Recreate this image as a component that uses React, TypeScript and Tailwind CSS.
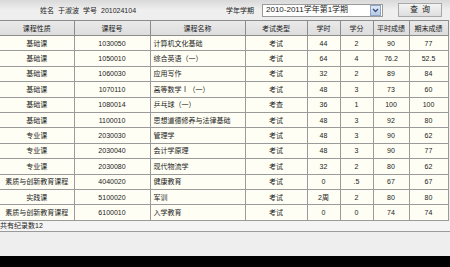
import React from "react";

const rows = [
  ["基础课", "1030050", "计算机文化基础", "考试", "44", "2", "90", "77"],
  ["基础课", "1050010", "综合英语（一）", "考试", "64", "4", "76.2", "52.5"],
  ["基础课", "1060030", "应用写作", "考试", "32", "2", "89", "84"],
  ["基础课", "1070110", "高等数学Ⅰ（一）", "考试", "48", "3", "73", "60"],
  ["基础课", "1080014", "乒乓球（一）", "考查", "36", "1", "100", "100"],
  ["基础课", "1100010", "思想道德修养与法律基础", "考试", "48", "3", "92", "80"],
  ["专业课", "2030030", "管理学", "考试", "48", "3", "90", "62"],
  ["专业课", "2030040", "会计学原理", "考试", "48", "3", "90", "77"],
  ["专业课", "2030080", "现代物流学", "考试", "32", "2", "80", "62"],
  ["素质与创新教育课程", "4040020", "健康教育", "考试", "0", ".5", "67", "67"],
  ["实践课", "5100020", "军训", "考试", "2周", "2", "80", "80"],
  ["素质与创新教育课程", "6100010", "入学教育", "考试", "0", "0", "74", "74"],
];

const headers = ["课程性质", "课程号", "课程名称", "考试类型", "学时", "学分", "平时成绩", "期末成绩"];
const widths = [74, 76, 95, 62, 33, 33, 36, 39];

export default function App() {
  return (
    <div
      className="w-[450px] h-[267px] overflow-hidden bg-[#eeeeee] text-[7px] leading-none text-[#222]"
      style={{ fontFamily: '"Liberation Sans", "Noto Sans CJK SC", sans-serif' }}
    >
      {/* top bar */}
      <div className="h-[20px] bg-gradient-to-b from-[#d9d9d9] via-[#efefef] to-[#eeeeee] flex items-center">
        <div className="w-[225px] flex items-center pl-[40px] gap-[4px]">
          <span>姓名</span>
          <span>于淑波</span>
          <span>学号</span>
          <span>201024104</span>
        </div>
        <span className="ml-[1px]">学年学期</span>
        <div className="ml-[8px] w-[121px] h-[13px] bg-white border border-[#9a9a9a] flex items-center justify-between">
          <span className="pl-[3px] text-[8px]">2010-2011学年第1学期</span>
          <div className="w-[11px] h-[11px] mr-[1px] bg-gradient-to-b from-[#dfe8f6] to-[#b9c9e4] border border-[#8ea3c8] flex items-center justify-center">
            <svg width="7" height="5" viewBox="0 0 7 5">
              <path d="M1 1 L3.5 3.5 L6 1" stroke="#3a4e7a" strokeWidth="1.3" fill="none" />
            </svg>
          </div>
        </div>
        <div className="ml-[15px] w-[44px] h-[14px] bg-gradient-to-b from-[#f4f4f4] to-[#dedede] border border-[#a8a8a8] flex items-center justify-center text-[8px] tracking-[4px]">
          <span className="pl-[4px]">查询</span>
        </div>
      </div>

      {/* table */}
      <table className="border-collapse table-fixed w-[448px]">
        <colgroup>
          {widths.map((w, i) => (
            <col key={i} style={{ width: w }} />
          ))}
        </colgroup>
        <thead>
          <tr className="h-[15px] bg-gradient-to-b from-[#eaeaea] to-[#dcdcdc]">
            {headers.map((h, i) => (
              <th
                key={i}
                className="font-normal text-center border-t border-b border-l border-[#8c8c8c] first:border-l-0 border-r"
              >
                {h}
              </th>
            ))}
          </tr>
        </thead>
        <tbody className="bg-[#fefef4]">
          {rows.map((r, ri) => (
            <tr key={ri} className="h-[15.4px]">
              {r.map((c, ci) => (
                <td
                  key={ci}
                  className={`border border-[#9a9a9a] first:border-l-0 whitespace-nowrap overflow-hidden ${
                    ci === 2 ? "text-left pl-[3px]" : "text-center"
                  }`}
                >
                  {c}
                </td>
              ))}
            </tr>
          ))}
        </tbody>
      </table>

      {/* footer */}
      <div className="h-[11px] bg-[#f4f4f4] border-b border-[#9a9a9a] flex items-center">
        <span>共有纪录数12</span>
      </div>
      <div className="h-[24px] bg-[#eeeeee]" />
      <div className="h-[12px] bg-black" />
    </div>
  );
}
